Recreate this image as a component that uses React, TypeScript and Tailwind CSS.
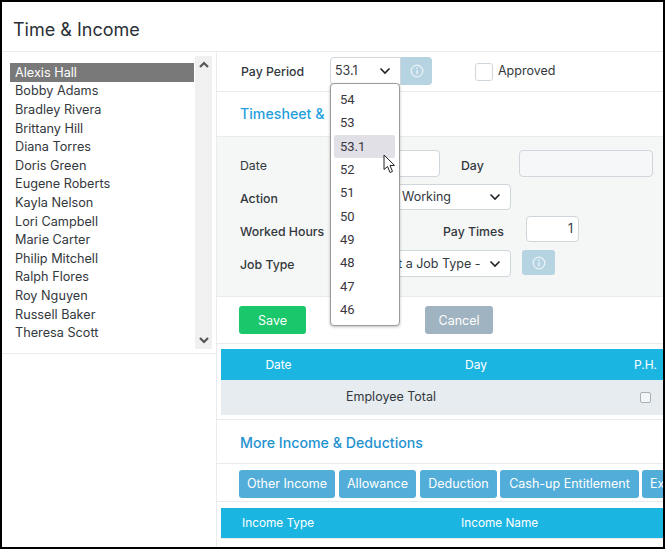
import React from "react";

const names = ["Bobby Adams","Bradley Rivera","Brittany Hill","Diana Torres","Doris Green","Eugene Roberts","Kayla Nelson","Lori Campbell","Marie Carter","Philip Mitchell","Ralph Flores","Roy Nguyen","Russell Baker","Theresa Scott"];
const periods = ["54","53","53.1","52","51","50","49","48","47","46"];

function Chevron({ cls = "" }: { cls?: string }) {
  return (
    <svg width="12" height="8" viewBox="0 0 12 8" className={cls} fill="none" stroke="#1f2328" strokeWidth="1.6">
      <path d="M1.5 1.5 L6 6 L10.5 1.5" />
    </svg>
  );
}

function Info({ size = 14 }: { size?: number }) {
  return (
    <svg width={size} height={size} viewBox="0 0 14 14" fill="none" stroke="#e8f2f7" strokeWidth="1.3">
      <circle cx="7" cy="7" r="5.8" />
      <path d="M7 6.2 V10.2" strokeWidth="1.5" />
      <path d="M7 3.6 V5" strokeWidth="1.5" />
    </svg>
  );
}

function Label({ children, w, cls = "" }: { children: React.ReactNode; w: string; cls?: string }) {
  return <div className={`${w} ${cls} shrink-0 text-[12.3px] font-medium text-[#33383d]`}>{children}</div>;
}

export default function App() {
  return (
    <div className="relative h-[549px] w-[665px] overflow-hidden border-2 border-black bg-white font-['Inter','Liberation_Sans',sans-serif] text-[12.5px] text-[#33383d]">
      <div className="flex h-[50px] items-center border-b border-[#e9ecee] pl-[11px] pt-[6px] text-[18px] leading-none text-[#2b3036]">Time &amp; Income</div>
      <div className="flex h-[495px]">
        <div className="w-[215px] shrink-0 border-r border-[#e9ecee]">
          <div className="flex h-[302px] border-b border-[#e9ecee] pl-[8px] pt-[4px]">
            <div className="w-[184px] pt-[7px] text-[12.7px] leading-[18.6px]">
              <div className="h-[19px] bg-[#797979] pl-[5px] pt-[1px] text-white">Alexis Hall</div>
              <div className="pt-[0.4px]">
                {names.map((n) => (
                  <div key={n} className="pl-[5px] text-[#33383d]">{n}</div>
                ))}
              </div>
            </div>
            <div className="ml-[1px] flex h-[293px] w-[17px] flex-col items-center justify-between bg-[#f0f0f0] py-[5px]">
              <svg width="10" height="7" viewBox="0 0 10 7" fill="none" stroke="#555" strokeWidth="2.2"><path d="M1 6 L5 2 L9 6" /></svg>
              <svg width="10" height="7" viewBox="0 0 10 7" fill="none" stroke="#555" strokeWidth="2.2"><path d="M1 1 L5 5 L9 1" /></svg>
            </div>
          </div>
        </div>
        <div className="min-w-0 flex-1">
          <div className="flex h-[40px] items-center border-b border-[#e9ecee] pl-[24px]">
            <Label w="w-[89px]" cls="mt-[1px]">Pay Period</Label>
            <div className="-mt-[1px] flex h-[28px] w-[71px] items-center justify-between rounded-l-[4px] border border-[#cfd6dc] pl-[4px] pr-[9px]">
              <span>53.1</span>
              <Chevron />
            </div>
            <div className="-mt-[1px] flex h-[28px] w-[31px] items-center justify-center rounded-r-[4px] bg-[#b5d3e1]"><Info /></div>
            <div className="ml-[43px] h-[18px] w-[18px] rounded-[3px] border border-[#cfd6dc]" />
            <span className="ml-[5px] text-[#33383d]">Approved</span>
          </div>
          <div className="flex h-[45px] items-center border-b border-[#e9ecee] pb-[1px] pl-[23px] text-[14.2px] font-medium text-[#1fa0dc]">Timesheet &amp;<span className="ml-[10px]">Hours</span></div>
          <div className="flex h-[160px] flex-col border-b border-[#e9ecee] bg-[#f5f6f6] pl-[23px] pt-[13px]">
            <div className="flex h-[27px] items-center">
              <Label w="w-[95px]" cls="pt-[5px] font-normal">Date</Label>
              <div className="h-[27px] w-[105px] rounded-[4px] border border-[#cfd6dc] bg-white" />
              <Label w="w-[58px]" cls="ml-[21px] pt-[5px]">Day</Label>
              <div className="h-[27px] w-[134px] rounded-[4px] border border-[#cfd6dc] bg-[#f6f7f8]" />
            </div>
            <div className="mt-[6px] flex h-[27px] items-center">
              <Label w="w-[95px]" cls="pt-[5px]">Action</Label>
              <div className="flex h-[26px] w-[176px] items-center justify-between rounded-[4px] border border-[#cfd6dc] bg-white pl-[66px] pr-[9px]">
                <span className="pt-[1px]">Working</span>
                <Chevron />
              </div>
            </div>
            <div className="mt-[6px] flex h-[27px] items-center">
              <Label w="w-[203px]" cls="pt-[5px]">Worked Hours</Label>
              <Label w="w-[83px]" cls="pt-[5px]">Pay Times</Label>
              <div className="-mt-[1px] flex h-[26px] w-[53px] items-center justify-end rounded-[4px] border border-[#cfd6dc] bg-white pr-[5px]">1</div>
            </div>
            <div className="mt-[7px] flex h-[27px] items-center">
              <Label w="w-[95px]" cls="pt-[4px]">Job Type</Label>
              <div className="flex h-[27px] w-[176px] items-center justify-between rounded-[4px] border border-[#cfd6dc] bg-white pl-[20px] pr-[9px]">
                <span className="pt-[1px]">- Select a Job Type -</span>
                <Chevron />
              </div>
              <div className="-mt-[2px] ml-[11px] flex h-[25px] w-[33px] items-center justify-center rounded-[3px] bg-[#b5d3e1]"><Info /></div>
            </div>
          </div>
          <div className="flex h-[47px] items-start border-b border-[#e9ecee] pl-[22px] pt-[9px]">
            <div className="flex h-[28px] w-[67px] items-center justify-center rounded-[3px] bg-[#1ac86b] pt-[2px] text-white">Save</div>
            <div className="ml-[119px] flex h-[28px] w-[68px] items-center justify-center rounded-[3px] bg-[#9fb3c0] pt-[2px] text-white">Cancel</div>
          </div>
          <div className="ml-[4px] mt-[5px] text-[12px]">
            <div className="grid h-[31px] grid-cols-[115px_280px_1fr] items-center bg-[#1bb5e2] text-center text-white">
              <span>Date</span><span>Day</span><span className="pl-[12px]">P.H.</span>
            </div>
            <div className="grid h-[35px] grid-cols-[115px_280px_1fr] items-center bg-[#e6ecef] pb-[1px] text-[12.5px]">
              <span /><span className="pl-[10px] text-[#33383d]">Employee Total</span>
              <span className="ml-[24px] h-[11px] w-[11px] rounded-[2px] border border-[#a8b0b6] bg-[#f4f5f6]" />
            </div>
          </div>
          <div className="mt-[4px] flex h-[45px] items-center border-y border-[#e9ecee] pl-[23px] pt-[3px] text-[14.2px] font-medium text-[#1f93d0]">More Income &amp; Deductions</div>
          <div className="flex h-[38px] items-start gap-[4px] overflow-hidden border-b border-[#e9ecee] pl-[22px] pt-[6px] text-white">
            <div className="flex h-[28px] w-[96px] shrink-0 items-center justify-center rounded-[3px] bg-[#52add9]">Other Income</div>
            <div className="flex h-[28px] w-[77px] shrink-0 items-center justify-center rounded-[3px] bg-[#52add9]">Allowance</div>
            <div className="flex h-[28px] w-[77px] shrink-0 items-center justify-center rounded-[3px] bg-[#52add9]">Deduction</div>
            <div className="-ml-[1px] flex h-[28px] w-[139px] shrink-0 items-center justify-center rounded-[3px] bg-[#52add9]">Cash-up Entitlement</div>
            <div className="-ml-[1px] flex h-[28px] w-[70px] shrink-0 items-center justify-start rounded-[3px] bg-[#52add9] pl-[8px]">Extra</div>
          </div>
          <div className="ml-[4px] mt-[6px] flex h-[31px] items-center border-b border-[#e9ecee] bg-[#1bb5e2] pt-[1px] text-[11.8px] text-white">
            <span className="w-[240px] pl-[21px]">Income Type</span>
            <span>Income Name</span>
          </div>
        </div>
      </div>

      <div className="absolute left-[327.5px] top-[81px] h-[243px] w-[70px] rounded-[4px] border border-[#9b9b9b] bg-white pl-[3.5px] pr-[3.5px] pt-[4px] font-['Roboto','Liberation_Sans',sans-serif] text-[13px] text-[#3a3640] shadow-[0_1px_3px_rgba(0,0,0,0.25)]">
        {periods.map((p) => (
          <div key={p} className={`h-[23.33px] rounded-[2px] pl-[6px] leading-[23px] ${p === "53.1" ? "bg-[#e0e0e6]" : ""}`}>{p}</div>
        ))}
      </div>
      <svg className="absolute left-[381px] top-[152px]" width="13" height="20" viewBox="0 0 13 20">
        <path d="M1 1 V15.5 L4.5 12.5 L7 18.5 L9.5 17.4 L7 11.6 L11.5 11.4 Z" fill="#fff" stroke="#222" strokeWidth="1" />
      </svg>
    </div>
  );
}
